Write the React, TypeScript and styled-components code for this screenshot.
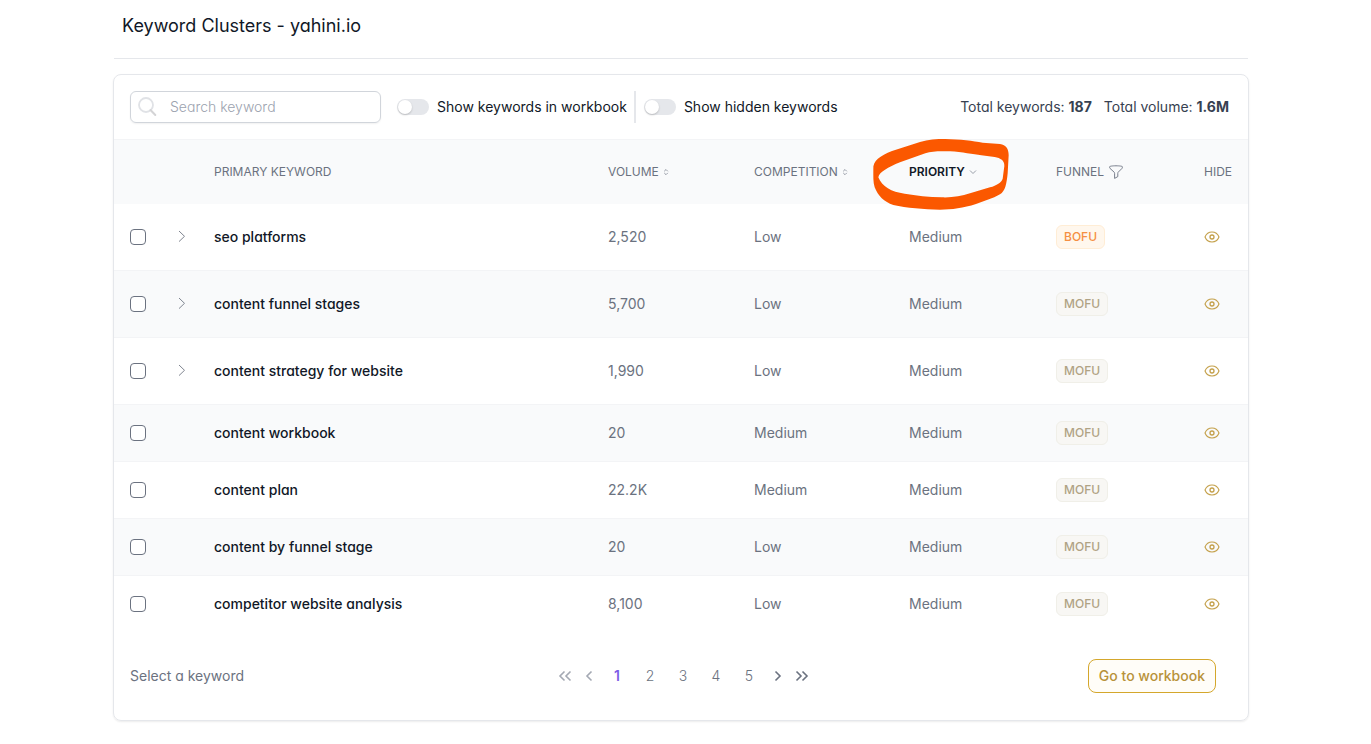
import React from "react";
import styled, { createGlobalStyle } from "styled-components";

const GlobalStyle = createGlobalStyle`
  *, *::before, *::after { box-sizing: border-box; }
  body {
    margin: 0;
    background: #fff;
    color: #111827;
    font-family: Inter, "Liberation Sans", sans-serif;
    font-size: 14px;
    line-height: 20px;
    font-feature-settings: "cv11";
  }
  button, input { font: inherit; font-feature-settings: inherit; letter-spacing: inherit; color: inherit; }
  button { background: none; border: 0; padding: 0; cursor: pointer; }
  svg { display: block; }
`;

const Page = styled.main`
  padding: 0 122px 24px 113px;
`;

const PageHeader = styled.header`
  height: 59px;
  margin: 0 1px;
  padding: 12px 8px;
  border-bottom: 1px solid #e5e7eb;
`;

const Title = styled.h1`
  margin: 0;
  font-size: 18px;
  line-height: 28px;
  font-weight: 400;
`;

const Card = styled.section`
  margin-top: 15px;
  border: 1px solid #e5e7eb;
  border-radius: 8px;
  box-shadow: 0 1px 2px rgba(0, 0, 0, 0.08);
`;

const Toolbar = styled.div`
  display: flex;
  align-items: center;
  height: 64px;
  padding: 0 19px 0 16px;
`;

const SearchBox = styled.label`
  display: flex;
  align-items: center;
  width: 251px;
  height: 32px;
  padding-left: 7px;
  margin-right: 16px;
  border: 1px solid #d1d5db;
  border-radius: 6px;
  box-shadow: 0 1px 2px rgba(0, 0, 0, 0.06);
`;

const SearchInput = styled.input`
  flex: 1;
  min-width: 0;
  margin-left: 12px;
  padding: 0;
  border: 0;
  outline: 0;
  background: transparent;
  &::placeholder { color: #9ca3af; opacity: 1; font-weight: 300; }
`;

const SwitchLabel = styled.label`
  display: flex;
  align-items: center;
  gap: 8px;
`;

const Switch = styled.input`
  appearance: none;
  width: 32px;
  height: 16px;
  margin: 0;
  border-radius: 8px;
  background: #e5e7eb;
  &::before {
    content: "";
    display: block;
    width: 14px;
    height: 14px;
    margin: 1px;
    border-radius: 50%;
    background: #fff;
    box-shadow: 0 1px 2px rgba(0, 0, 0, 0.2);
  }
  &:checked { background: #c4973b; }
  &:checked::before { margin-left: 17px; }
`;

const Divider = styled.span`
  width: 2px;
  height: 32px;
  margin: 0 8px 0 7px;
  background: #e5e7eb;
`;

const Totals = styled.div`
  display: flex;
  gap: 12px;
  margin-left: auto;
  color: #374151;
  b { font-weight: 700; }
`;

const Table = styled.table`
  width: 100%;
  table-layout: fixed;
  border-collapse: separate;
  border-spacing: 0;
`;

const Col = styled.col<{ $width?: number }>`
  width: ${(p) => (p.$width ? `${p.$width}px` : "auto")};
`;

const HeadCell = styled.th<{ $active?: boolean }>`
  position: relative;
  height: 65px;
  padding: 0 0 0 16px;
  border-top: 1px solid #f3f4f6;
  background: #f9fafb;
  color: ${(p) => (p.$active ? "#111827" : "#6b7280")};
  font-size: 12px;
  line-height: 16px;
  font-weight: ${(p) => (p.$active ? 600 : 400)};
  text-align: left;
  white-space: nowrap;
`;

const SortButton = styled.button<{ $gap?: number }>`
  display: flex;
  align-items: center;
  gap: ${(p) => p.$gap ?? 4}px;
`;

const Row = styled.tr<{ $tall?: boolean }>`
  height: ${(p) => (p.$tall ? 67 : 57)}px;
  &:first-child { height: 66px; }
  &:nth-child(even) { background: #f9fafb; }
  &:not(:first-child) td { border-top: 1px solid #f3f4f6; }
`;

const Cell = styled.td<{ $strong?: boolean }>`
  padding: 0 0 0 16px;
  color: ${(p) => (p.$strong ? "#111827" : "#6b7280")};
  font-weight: ${(p) => (p.$strong ? 500 : 400)};
  white-space: nowrap;
`;

const Checkbox = styled.input`
  appearance: none;
  display: block;
  width: 16px;
  height: 16px;
  margin: 0;
  border: 1px solid #6b7280;
  border-radius: 4px;
  background: #fff;
  &:checked { background: #c4973b; }
`;

const IconButton = styled.button`
  display: block;
`;

const Badge = styled.span<{ $hot?: boolean }>`
  display: inline-block;
  padding: 3px 7px;
  border: 1px solid ${(p) => (p.$hot ? "#ffedd5" : "#f0efe8")};
  border-radius: 6px;
  background: ${(p) => (p.$hot ? "#fff7ed" : "#f8f7f4")};
  color: ${(p) => (p.$hot ? "#f58f42" : "#b0a384")};
  font-size: 12px;
  line-height: 16px;
  font-weight: 500;
`;

const Footer = styled.footer`
  display: grid;
  grid-template-columns: 1fr auto 1fr;
  align-items: center;
  height: 88px;
  padding: 0 12px 0 16px;
  color: #6b7280;
`;

const Pager = styled.nav`
  display: flex;
  align-items: center;
`;

const PageButton = styled.button<{ $current?: boolean }>`
  width: 33px;
  color: ${(p) => (p.$current ? "#7c5ce6" : "#6b7280")};
  font-weight: ${(p) => (p.$current ? 600 : 300)};
`;

const ArrowButton = styled.button<{ $dim?: boolean }>`
  display: flex;
  justify-content: center;
  width: 24px;
  color: ${(p) => (p.$dim ? "#a4a9b3" : "#6b7280")};
`;

const PrimaryButton = styled.button`
  justify-self: end;
  height: 34px;
  margin-right: 20px;
  padding: 0 10px;
  border: 1px solid #d4a72c;
  border-radius: 8px;
  background: #fffdf8;
  color: #b8923a;
  font-weight: 500;
`;

const Scribble = styled.svg`
  position: absolute;
  left: -33px;
  top: -10px;
  pointer-events: none;
`;

const SearchIcon = () => (
  <svg width="20" height="20" viewBox="0 0 20 20" fill="none" stroke="#e0e2e6">
    <circle cx="8" cy="8" r="7" strokeWidth="1.8" />
    <path d="M12.500 13l4.800 5" stroke="#d4d4d6" strokeWidth="2" strokeLinecap="round" />
  </svg>
);

const SortIcon = () => (
  <svg width="6" height="8" viewBox="0 0 6 8" fill="none" stroke="#8d939e" strokeWidth="0.9">
    <path d="M1.200 3.300L3 1.500l1.800 1.800M1.200 4.900L3 6.700l1.800-1.800" />
  </svg>
);

const DownIcon = () => (
  <svg width="8" height="6" viewBox="0 0 8 6" fill="none" stroke="#8d939e" strokeWidth="0.9">
    <path d="M1 1.5l3 3 3-3" />
  </svg>
);

const FunnelIcon = () => (
  <svg width="14" height="14" viewBox="0 0 14 14" fill="none" stroke="#6b7280" strokeWidth="0.9" strokeLinejoin="round">
    <path d="M.6 1.8C.6 1.2 3.5.8 7 .8s6.4.4 6.4 1v.5c0 .5-.2.9-.5 1.2L9.300 7.100c-.3.3-.5.7-.5 1.200v3.300L5.600 13.400V8.300c0-.5-.2-.9-.5-1.200L1.100 3.500C.8 3.200.6 2.800.6 2.300z" />
  </svg>
);

const ChevronIcon = () => (
  <svg width="8" height="14" viewBox="0 0 8 14" fill="none" stroke="#7f8590" strokeWidth="1">
    <path d="M1 1l5.500 5.300L1 11.600" />
  </svg>
);

const EyeIcon = () => (
  <svg width="16" height="16" viewBox="0 0 16 16" fill="none" stroke="#c4a04a" strokeWidth="1.1">
    <path d="M1 8C2.300 4.800 4.900 3 8 3s5.700 1.800 7 5c-1.300 3.200-3.900 5-7 5S2.300 11.200 1 8z" />
    <circle cx="8" cy="8" r="2" strokeWidth="1.300" />
  </svg>
);

const PagerArrow = ({ double, flip }: { double?: boolean; flip?: boolean }) => (
  <svg
    width={double ? 14 : 8}
    height="12"
    viewBox={double ? "0 0 14 12" : "0 0 8 12"}
    fill="none"
    stroke="currentColor"
    strokeWidth="1.6"
  >
    <g transform={flip ? `translate(${double ? 14 : 8} 0) scale(-1 1)` : undefined}>
      <path d={double ? "M1.500 1.500L6 6l-4.500 4.500M7.500 1.500L12 6l-4.500 4.500" : "M1.500 1.500L6 6l-4.500 4.500"} />
    </g>
  </svg>
);

const CircleMark = () => (
  <Scribble width="160" height="90" viewBox="0 0 480 270" aria-hidden="true">
    <path
      fill="#fb5800"
      fillRule="evenodd"
      d="M40 118C38 92 60 78 96 63L180 36C204 28 230 27 256 27C300 28 340 33 368 38L420 42C438 45 446 56 446 76L443 130C440 160 436 184 420 193C398 206 372 213 348 222C310 234 276 239 240 239C190 238 140 234 100 225C72 216 54 198 44 172C39 156 40 138 40 118ZM55 142C58 126 84 112 120 97L196 70C216 63 240 63 270 64C306 66 340 73 364 76L404 81C422 84 434 92 433 108L428 146C424 158 410 166 390 172L330 190C304 199 276 203 246 202C206 201 168 197 134 191C94 186 66 170 55 142Z"
    />
  </Scribble>
);

type Keyword = { name: string; volume: string; competition: string; funnel: string; group?: boolean };

const keywords: Keyword[] = [
  { name: "seo platforms", volume: "2,520", competition: "Low", funnel: "BOFU", group: true },
  { name: "content funnel stages", volume: "5,700", competition: "Low", funnel: "MOFU", group: true },
  { name: "content strategy for website", volume: "1,990", competition: "Low", funnel: "MOFU", group: true },
  { name: "content workbook", volume: "20", competition: "Medium", funnel: "MOFU" },
  { name: "content plan", volume: "22.2K", competition: "Medium", funnel: "MOFU" },
  { name: "content by funnel stage", volume: "20", competition: "Low", funnel: "MOFU" },
  { name: "competitor website analysis", volume: "8,100", competition: "Low", funnel: "MOFU" },
];

export default function App() {
  return (
    <>
      <GlobalStyle />
      <Page>
        <PageHeader>
          <Title>Keyword Clusters - yahini.io</Title>
        </PageHeader>
        <Card>
          <Toolbar>
            <SearchBox>
              <SearchIcon />
              <SearchInput type="text" placeholder="Search keyword" aria-label="Search keyword" />
            </SearchBox>
            <SwitchLabel>
              <Switch type="checkbox" role="switch" />
              Show keywords in workbook
            </SwitchLabel>
            <Divider />
            <SwitchLabel>
              <Switch type="checkbox" role="switch" />
              Show hidden keywords
            </SwitchLabel>
            <Totals>
              <span>Total keywords: <b>187</b></span>
              <span>Total volume: <b>1.6M</b></span>
            </Totals>
          </Toolbar>
          <Table>
            <colgroup>
              <Col $width={48} />
              <Col $width={36} />
              <Col />
              <Col $width={146} />
              <Col $width={155} />
              <Col $width={147} />
              <Col $width={148} />
              <Col $width={60} />
            </colgroup>
            <thead>
              <tr>
                <HeadCell />
                <HeadCell />
                <HeadCell>PRIMARY KEYWORD</HeadCell>
                <HeadCell><SortButton>VOLUME <SortIcon /></SortButton></HeadCell>
                <HeadCell><SortButton>COMPETITION <SortIcon /></SortButton></HeadCell>
                <HeadCell $active>
                  <SortButton>PRIORITY <DownIcon /></SortButton>
                  <CircleMark />
                </HeadCell>
                <HeadCell><SortButton $gap={5}>FUNNEL <FunnelIcon /></SortButton></HeadCell>
                <HeadCell>HIDE</HeadCell>
              </tr>
            </thead>
            <tbody>
              {keywords.map((k) => (
                <Row key={k.name} $tall={k.group}>
                  <Cell><Checkbox type="checkbox" aria-label={`Select ${k.name}`} /></Cell>
                  <Cell>{k.group && <IconButton aria-label={`Expand ${k.name}`}><ChevronIcon /></IconButton>}</Cell>
                  <Cell $strong>{k.name}</Cell>
                  <Cell>{k.volume}</Cell>
                  <Cell>{k.competition}</Cell>
                  <Cell>Medium</Cell>
                  <Cell><Badge $hot={k.funnel === "BOFU"}>{k.funnel}</Badge></Cell>
                  <Cell><IconButton aria-label={`Hide ${k.name}`}><EyeIcon /></IconButton></Cell>
                </Row>
              ))}
            </tbody>
          </Table>
          <Footer>
            <span>Select a keyword</span>
            <Pager aria-label="Pages">
              <ArrowButton $dim aria-label="First page"><PagerArrow double flip /></ArrowButton>
              <ArrowButton $dim aria-label="Previous page"><PagerArrow flip /></ArrowButton>
              {[1, 2, 3, 4, 5].map((n) => (
                <PageButton key={n} $current={n === 1}>{n}</PageButton>
              ))}
              <ArrowButton aria-label="Next page"><PagerArrow /></ArrowButton>
              <ArrowButton aria-label="Last page"><PagerArrow double /></ArrowButton>
            </Pager>
            <PrimaryButton>Go to workbook</PrimaryButton>
          </Footer>
        </Card>
      </Page>
    </>
  );
}
